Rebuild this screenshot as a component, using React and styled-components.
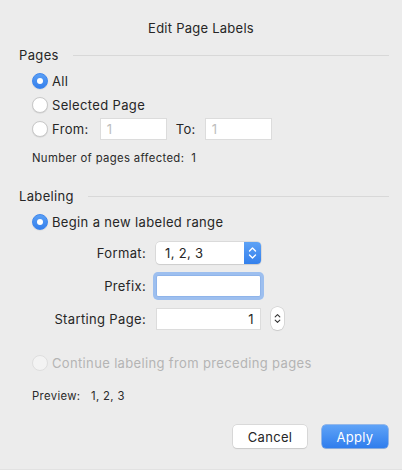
import React from 'react';
import styled, { createGlobalStyle } from 'styled-components';

const Global = createGlobalStyle`
  html, body {
    margin: 0;
    padding: 0;
    background: #ececec;
  }
  body {
    font-family: Inter, "Noto Sans", "Liberation Sans", sans-serif;
    color: #262626;
    -webkit-font-smoothing: antialiased;
  }
`;

const Dialog = styled.div`
  width: 402px;
  height: 470px;
  box-sizing: border-box;
  background: #ececec;
  border-bottom: 1px solid #e2e2e2;
  display: flex;
  flex-direction: column;
  font-size: 13px;
  letter-spacing: 0.35px;
`;

const Title = styled.div`
  margin-top: 19px;
  height: 18px;
  line-height: 18px;
  text-align: center;
  font-size: 13px;
  letter-spacing: 0.25px;
`;

const SectionHeader = styled.div`
  display: flex;
  align-items: center;
  gap: 14px;
  height: 18px;
  margin: ${(p) => p.top}px 13px 0 19px;
  line-height: 18px;

  &::after {
    content: '';
    flex: 1;
    height: 1px;
    background: #d8d8d8;
  }
`;

const RadioRow = styled.label`
  display: flex;
  align-items: center;
  gap: 4px;
  height: 24px;
  margin-left: 32px;
  margin-top: ${(p) => p.top || 0}px;
  color: ${(p) => (p.disabled ? '#b4b4b4' : '#262626')};
`;

const Radio = styled.span`
  width: 16px;
  height: 16px;
  box-sizing: border-box;
  border-radius: 50%;
  flex: none;
  display: flex;
  align-items: center;
  justify-content: center;
  background: ${(p) => (p.checked ? 'linear-gradient(#5a9ff5, #3580ec)' : p.disabled ? '#f3f3f3' : '#fff')};
  border: 1px solid ${(p) => (p.checked ? '#3d86ee' : p.disabled ? '#dedede' : '#c9c9c9')};
  box-shadow: ${(p) => (p.disabled ? 'none' : '0 0.5px 1px rgba(0,0,0,0.12)')};

  &::after {
    content: '';
    display: ${(p) => (p.checked ? 'block' : 'none')};
    width: 6px;
    height: 6px;
    border-radius: 50%;
    background: #fff;
  }
`;

const TextBox = styled.div`
  box-sizing: border-box;
  width: ${(p) => p.w || 67}px;
  height: 22px;
  background: #fff;
  border: 1px solid ${(p) => (p.focused ? '#8fb4ea' : '#dcdcdc')};
  box-shadow: ${(p) => (p.focused ? '0 0 0 3px #9dbfef' : 'none')};
  border-radius: ${(p) => (p.focused ? '2px' : '0')};
  padding: 0 6px;
  display: flex;
  align-items: center;
  justify-content: ${(p) => (p.right ? 'flex-end' : 'flex-start')};
  color: ${(p) => (p.placeholder ? '#bdbdbd' : '#262626')};
  margin-left: ${(p) => p.left || 0}px;
`;

const Inline = styled.span`
  margin-left: ${(p) => p.left || 0}px;
`;

const Note = styled.div`
  margin: ${(p) => p.top}px 0 0 32px;
  height: 14px;
  line-height: 14px;
  font-size: 11.3px;
  letter-spacing: 0.35px;
  color: #2a2a2a;
  white-space: pre;
`;

const Form = styled.div`
  display: grid;
  grid-template-columns: 146px auto;
  column-gap: 10px;
  align-items: center;
  margin-top: 8px;
`;

const FieldLabel = styled.div`
  text-align: right;
  height: 22px;
  line-height: 22px;
  margin-top: ${(p) => p.top || 0}px;
`;

const Field = styled.div`
  display: flex;
  align-items: center;
  gap: 10px;
  margin-top: ${(p) => p.top || 0}px;
`;

const Popup = styled.div`
  box-sizing: border-box;
  width: 105px;
  height: 22px;
  display: flex;
  border-radius: 4px;
  background: #fff;
  box-shadow: 0 0 0 0.5px #c8c8c8, 0 1px 1px rgba(0, 0, 0, 0.1);
  overflow: hidden;
`;

const PopupText = styled.div`
  flex: 1;
  padding-left: 9px;
  line-height: 22px;
`;

const PopupArrows = styled.div`
  width: 17px;
  background: linear-gradient(#5da2f6, #3480ec);
  display: flex;
  align-items: center;
  justify-content: center;
`;

const Stepper = styled.div`
  width: 13px;
  height: 23px;
  box-sizing: border-box;
  border-radius: 6px;
  background: #fff;
  box-shadow: 0 0 0 0.5px #c4c4c4, 0 1px 1px rgba(0, 0, 0, 0.1);
  display: flex;
  align-items: center;
  justify-content: center;
`;

const Buttons = styled.div`
  display: flex;
  justify-content: flex-end;
  gap: 15px;
  margin: 22px 14px 0 0;
`;

const Button = styled.div`
  box-sizing: border-box;
  width: ${(p) => p.w}px;
  height: 23px;
  border-radius: 4px;
  display: flex;
  align-items: center;
  justify-content: center;
  font-size: 13px;
  letter-spacing: 0.3px;
  color: ${(p) => (p.primary ? '#fff' : '#262626')};
  background: ${(p) => (p.primary ? 'linear-gradient(#5fa3f7, #2f7ded)' : '#fff')};
  box-shadow: ${(p) =>
    p.primary
      ? '0 0 0 0.5px #3f83e6, 0 1px 1px rgba(0,0,0,0.12)'
      : '0 0 0 0.5px #c6c6c6, 0 1px 1px rgba(0,0,0,0.12)'};
`;

const Chevrons = ({ color, w = 9, h = 14 }) => (
  <svg width={w} height={h} viewBox="0 0 9 14" fill="none" stroke={color} strokeWidth="1.4" strokeLinecap="round" strokeLinejoin="round">
    <path d="M1.5 5 L4.5 2 L7.5 5" />
    <path d="M1.5 9 L4.5 12 L7.5 9" />
  </svg>
);

export default function App() {
  return (
    <>
      <Global />
      <Dialog>
        <Title>Edit Page Labels</Title>

        <SectionHeader top={9}>Pages</SectionHeader>
        <RadioRow top={5}>
          <Radio checked />
          All
        </RadioRow>
        <RadioRow>
          <Radio />
          Selected Page
        </RadioRow>
        <RadioRow>
          <Radio />
          From:
          <TextBox placeholder="1" left={7}>1</TextBox>
          <Inline left={5}>To:</Inline>
          <TextBox placeholder="1" left={5}>1</TextBox>
        </RadioRow>
        <Note top={10}>Number of pages affected:  1</Note>

        <SectionHeader top={22}>Labeling</SectionHeader>
        <RadioRow top={5}>
          <Radio checked />
          Begin a new labeled range
        </RadioRow>

        <Form>
          <FieldLabel>Format:</FieldLabel>
          <Field>
            <Popup>
              <PopupText>1, 2, 3</PopupText>
              <PopupArrows>
                <Chevrons color="#fff" />
              </PopupArrows>
            </Popup>
          </Field>
          <FieldLabel top={11}>Prefix:</FieldLabel>
          <Field top={11}>
            <TextBox w={105} focused />
          </Field>
          <FieldLabel top={10}>Starting Page:</FieldLabel>
          <Field top={10}>
            <TextBox w={105} right>1</TextBox>
            <Stepper>
              <Chevrons color="#333" w={7} h={13} />
            </Stepper>
          </Field>
        </Form>

        <RadioRow top={21} disabled>
          <Radio disabled />
          Continue labeling from preceding pages
        </RadioRow>
        <Note top={14}>Preview:   1, 2, 3</Note>

        <Buttons>
          <Button w={74}>Cancel</Button>
          <Button w={66} primary>Apply</Button>
        </Buttons>
      </Dialog>
    </>
  );
}
